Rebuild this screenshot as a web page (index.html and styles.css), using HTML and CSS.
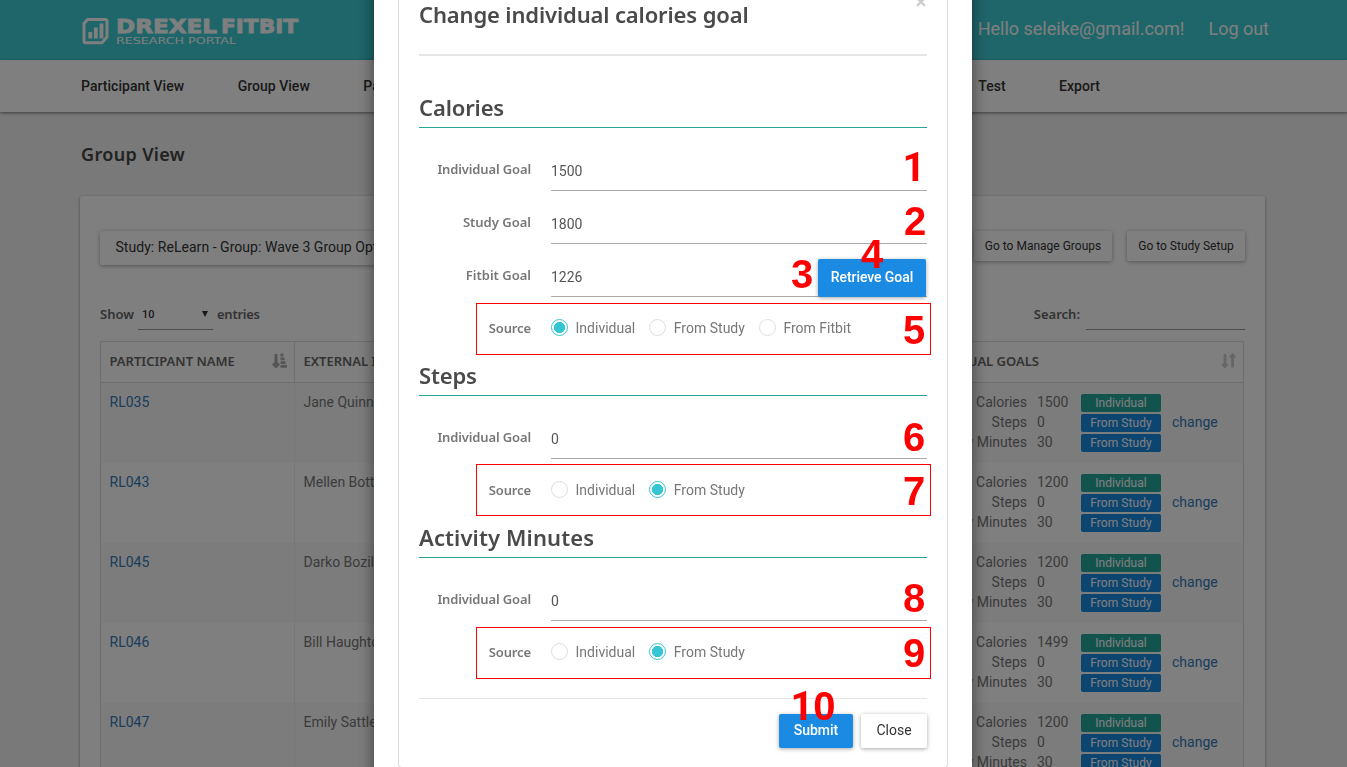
FILE: index.html
```
<!DOCTYPE html>
<html lang="en">
<head>
<meta charset="utf-8">
<title>Drexel Fitbit Research Portal</title>
<link rel="stylesheet" href="styles.css">
</head>
<body>
<div class="page">
  <header class="topbar">
    <svg class="logo" width="220" height="34" viewBox="0 -2 220 34">
      <path d="M7 3H25a1.500 1.500 0 0 1 1.500 1.500V20.500L21.500 26.200H5A1.500 1.500 0 0 1 3.500 24.700V7Z" transform="translate(-.5 .5)" fill="none" stroke="#fff" stroke-width="3" stroke-linejoin="round"/>
      <path d="M9.300 16v6.500M14.800 11.500v11M20.500 7.500v15" stroke="#fff" stroke-width="3.800"/>
      <text class="logo-main" x="35" y="17" textLength="101" lengthAdjust="spacingAndGlyphs">DREXEL</text>
      <text class="logo-main" x="140" y="17" textLength="77" lengthAdjust="spacingAndGlyphs">FITBIT</text>
      <text class="logo-sub" x="35" y="28" textLength="120" lengthAdjust="spacingAndGlyphs">RESEARCH PORTAL</text>
    </svg>
    <div class="user"><span>Hello seleike@gmail.com!</span><span>Log out</span></div>
  </header>
  <nav class="nav">
    <div class="nav-group"><span>Participant View</span><span>Group View</span><span>Participants</span></div>
    <div class="nav-group"><span>Test</span><span>Export</span></div>
  </nav>
  <h1 class="page-title">Group View</h1>
  <main class="card">
    <div class="toolbar">
      <div class="btn study">Study: ReLearn - Group: Wave 3 Group Options</div>
      <div class="toolbar-right"><div class="btn small manage">Go to Manage Groups</div><div class="btn small setup">Go to Study Setup</div></div>
    </div>
    <div class="filters">
      <div class="length"><span class="strong show">Show</span><span class="select"><span>10</span><i class="caret"></i></span><span class="strong entries">entries</span></div>
      <div class="search"><span class="strong searchlabel">Search:</span><span class="search-input"></span></div>
    </div>
    <div class="table">
      <div class="row head">
        <div class="cell name"><span>PARTICIPANT NAME</span>
          <svg class="sort" width="16" height="16" viewBox="0 0 16 16"><path d="M4 1v12M1 10.500l3 3 3-3" fill="none" stroke="#aaa" stroke-width="3"/><path d="M8.500 2h3M8.500 5.800h4M8.500 9.600h5M8.500 13.400h6.500" stroke="#aaa" stroke-width="2.800"/></svg></div>
        <div class="cell ext"><span>EXTERNAL ID</span></div>
        <div class="cell goals-head"><span>INDIVIDUAL GOALS</span>
          <svg class="sort" width="16" height="16" viewBox="0 0 16 16"><path d="M4 1v12M1.500 11 4 13.500 6.500 11M11.500 14.500V3M9 4.500 11.500 2 14 4.500" fill="none" stroke="#ccc" stroke-width="2.800"/></svg></div>
      </div>
      <div class="row odd"><div class="cell name link">RL035</div><div class="cell ext">Jane Quinn</div><div class="cell goals"><div class="metric"><span>Calories</span><span>Steps</span><span>Activity Minutes</span></div><div class="value"><span>1500</span><span>0</span><span>30</span></div><div class="badges"><b class="ind">Individual</b><b>From Study</b><b>From Study</b></div><span class="link change">change</span></div></div>
      <div class="row"><div class="cell name link">RL043</div><div class="cell ext">Mellen Botts</div><div class="cell goals"><div class="metric"><span>Calories</span><span>Steps</span><span>Activity Minutes</span></div><div class="value"><span>1200</span><span>0</span><span>30</span></div><div class="badges"><b class="ind">Individual</b><b>From Study</b><b>From Study</b></div><span class="link change">change</span></div></div>
      <div class="row odd"><div class="cell name link">RL045</div><div class="cell ext">Darko Bozil</div><div class="cell goals"><div class="metric"><span>Calories</span><span>Steps</span><span>Activity Minutes</span></div><div class="value"><span>1200</span><span>0</span><span>30</span></div><div class="badges"><b class="ind">Individual</b><b>From Study</b><b>From Study</b></div><span class="link change">change</span></div></div>
      <div class="row"><div class="cell name link">RL046</div><div class="cell ext">Bill Haughton</div><div class="cell goals"><div class="metric"><span>Calories</span><span>Steps</span><span>Activity Minutes</span></div><div class="value"><span>1499</span><span>0</span><span>30</span></div><div class="badges"><b class="ind">Individual</b><b>From Study</b><b>From Study</b></div><span class="link change">change</span></div></div>
      <div class="row odd"><div class="cell name link">RL047</div><div class="cell ext">Emily Sattler</div><div class="cell goals"><div class="metric"><span>Calories</span><span>Steps</span><span>Activity Minutes</span></div><div class="value"><span>1200</span><span>0</span><span>30</span></div><div class="badges"><b class="ind">Individual</b><b>From Study</b><b>From Study</b></div><span class="link change">change</span></div></div>
    </div>
  </main>
</div>
<div class="backdrop">
  <section class="modal">
    <div class="portlet">
      <div class="modal-title"><h2>Change individual calories goal</h2>
        <svg class="close" width="10" height="10" viewBox="0 0 10 10"><path d="M1 1l8 8M9 1L1 9" stroke="#ccc" stroke-width="2.200"/></svg></div>
      <h2 class="section first">Calories</h2>
      <div class="field tall"><label>Individual Goal</label><span class="input">1500</span></div>
      <div class="field"><label class="wide">Study Goal</label><span class="input">1800</span></div>
      <div class="field"><label class="wide">Fitbit Goal</label><span class="input">1226</span><div class="btn blue retrieve">Retrieve Goal</div></div>
      <div class="source"><label>Source</label><i class="radio on"></i><span class="opt">Individual</span><i class="radio"></i><span class="opt">From Study</span><i class="radio"></i><span class="opt">From Fitbit</span><div class="outline"></div></div>
      <h2 class="section">Steps</h2>
      <div class="field tall"><label>Individual Goal</label><span class="input">0</span></div>
      <div class="source"><label>Source</label><i class="radio"></i><span class="opt">Individual</span><i class="radio on"></i><span class="opt">From Study</span><div class="outline up"></div></div>
      <h2 class="section activity">Activity Minutes</h2>
      <div class="field tall"><label>Individual Goal</label><span class="input">0</span></div>
      <div class="source"><label>Source</label><i class="radio"></i><span class="opt">Individual</span><i class="radio on"></i><span class="opt">From Study</span><div class="outline"></div></div>
      <div class="actions"><div class="btn blue submit">Submit</div><div class="btn closebtn">Close</div></div>
    </div>
  </section>
  <span class="mark one m1">1</span><span class="mark m2">2</span><span class="mark m3">3</span><span class="mark m4">4</span><span class="mark m5">5</span><span class="mark m6">6</span><span class="mark m7">7</span><span class="mark m8">8</span><span class="mark m9">9</span><span class="mark m10"><span class="one">1</span>0</span>
</div>
</body>
</html>
```
FILE: styles.css
```
* { box-sizing: border-box; }
html, body { margin: 0; height: 767px; overflow: hidden; }
body { font: 14px/20px Roboto, sans-serif; color: #777; }
h1, h2 { margin: 0; font-weight: 600; }
h1, h2, label, .strong, .head { font-family: "Noto Sans", sans-serif; }
span, label, .btn { white-space: nowrap; }
.page { width: 1347px; height: 767px; overflow: hidden; background: #f2f2f2; }

.topbar { height: 60px; padding: 0 78px 2px 81px; background: #3eccd6; display: flex; justify-content: space-between; align-items: center; color: #fff; }
.logo { margin-top: 4px; }
.logo-main { font: 700 20px "DejaVu Sans", sans-serif; fill: #fff; stroke: #fff; stroke-width: .8px; }
.logo-sub { font: 400 9px "DejaVu Sans", sans-serif; fill: #fff; }
.user { display: flex; gap: 24px; font-size: 18px; letter-spacing: -.01px; }
.nav { height: 52px; padding: 0 247px 1px 81px; background: #fff; display: flex; justify-content: space-between; align-items: center; color: #333; font-weight: 500; box-shadow: 0 1px 3px rgba(0,0,0,.5); }
.nav-group { display: flex; gap: 53.5px; letter-spacing: .03px; }
.page-title { padding: 29px 0 0 81px; height: 84px; font-size: 18px; line-height: 26px; color: #444; letter-spacing: .35px; }

.card { margin: 0 82px 0 80px; height: 700px; padding: 35px 20px 0; background: #fff; border-radius: 3px; box-shadow: 0 1px 3px rgba(0,0,0,.4); }
.btn { border-radius: 2px; background: #fff; color: #333; box-shadow: 0 1px 4px rgba(0,0,0,.35); display: flex; align-items: center; justify-content: center; padding-bottom: 2px; }
.toolbar { display: flex; justify-content: space-between; height: 64px; align-items: flex-start; }
.study { height: 34px; width: 340px; padding-left: 15.5px; justify-content: flex-start; letter-spacing: .04px; }
.toolbar-right { display: flex; gap: 15px; }
.small { height: 30px; font-size: 12px; padding-bottom: 0; }
.manage { width: 138px; }
.setup { width: 118px; }
.filters { height: 46px; display: flex; justify-content: space-between; }
.strong { font-weight: 600; font-size: 13px; color: #666; }
.length, .search { display: flex; height: 35px; line-height: 39px; }
.show { width: 38px; }
.entries { letter-spacing: -.25px; }
.select { width: 75px; padding: 4px 5px 0 4px; border-bottom: 1px solid #999; display: flex; justify-content: space-between; align-items: center; font: 500 11px Roboto, sans-serif; color: #333; margin-right: 4px; }
.caret { border: 3.5px solid transparent; border-top: 6px solid #333; border-bottom: 0; }
.search-input { width: 159px; border-bottom: 1px solid #999; margin-left: 6px; }

.table { width: 1144px; border: 1px solid #ddd; height: 600px; }
.row { display: grid; grid-template-columns: 194px 300px 1fr; height: 80px; }
.odd { background: #f9f9f9; }
.head { height: 41px; border-bottom: 1px solid #ddd; font-weight: 600; font-size: 13px; color: #666; }
.cell { padding: 9px 9px 0 8.5px; border-right: 1px solid #eee; }
.cell:last-child { border-right: 0; }
.head .cell { display: flex; justify-content: space-between; align-items: center; padding: 0 6px 2px 8.5px; border-right-color: #ddd; }
.head .cell:last-child { justify-content: flex-end; gap: 182px; padding-right: 6px; }
.link { color: #337ab7; }
.goals { display: grid; grid-template-columns: 1fr 34px 80px 72px; column-gap: 10px; padding-right: 0; }
.metric, .value, .badges { display: flex; flex-direction: column; }
.metric { align-items: flex-end; }
.badges { gap: 2px; padding-top: 2px; }
.badges b { height: 18px; border-radius: 2px; background: #1a8ae2; color: #fff; font: 400 12px/18px Roboto, sans-serif; text-align: center; letter-spacing: .05px; }
.badges .ind { background: #26a69a; }
.change { padding: 20px 0 0 1px; }

.backdrop { position: fixed; inset: 0; background: rgba(0,0,0,.5); overflow: hidden; }
.modal { position: absolute; left: 374px; top: -40px; width: 598px; height: 860px; padding: 0 24px; background: #fff; box-shadow: 0 5px 15px rgba(0,0,0,.5); }
.portlet { height: 808px; border: 1px solid #ddd; border-top: 0; padding: 39px 20px 0; border-radius: 4px; }
.modal-title { height: 57px; border-bottom: 2px solid #e5e5e5; display: flex; justify-content: space-between; align-items: flex-start; }
h2 { font-size: 22px; color: #4a4a4a; line-height: 30px; letter-spacing: -.14px; }
.close { margin: -2px 1px 0 0; }
.section { height: 34px; border-bottom: 1px solid #26a69a; line-height: 27px; }
.activity { letter-spacing: .12px; }
.first { margin-top: 38px; }
.field { height: 53px; display: grid; grid-template-columns: 112px 1fr auto; column-gap: 20px; align-items: end; }
.tall { height: 63px; }
label { font-weight: 600; font-size: 13px; line-height: 18px; text-align: right; color: #777; letter-spacing: -.13px; }
.wide { letter-spacing: 0; }
.field label { padding-bottom: 13px; }
.input { height: 40px; line-height: 40px; border-bottom: 1px solid #aaa; color: #555; letter-spacing: -.04px; grid-column: 2 / 4; grid-row: 1; }
.blue { background: #1a8ae2; color: #fff; font-weight: 500; }
.retrieve { width: 108px; height: 38px; margin-right: 1px; letter-spacing: -.08px; grid-column: 3; grid-row: 1; }
.source { position: relative; height: 65px; padding-top: 21px; display: flex; align-items: flex-start; }
.source label { width: 112px; margin-right: 20px; line-height: 20px; }
.radio { width: 17px; height: 17px; border: 1px solid #ddd; border-radius: 50%; margin-top: 1px; }
.on { border-color: #36c6d3; background: radial-gradient(circle, #36c6d3 5.300px, #fff 5.900px); }
.opt { margin: 0 14px 0 7.500px; letter-spacing: .01px; }
.outline { position: absolute; left: 57px; top: 6px; width: 455px; height: 52px; border: 1px solid #f00; }
.up { top: 5px; }
.actions { margin-top: 12px; border-top: 1px solid #e5e5e5; padding-top: 15px; display: flex; justify-content: flex-end; gap: 8px; }
.submit { width: 74px; height: 34px; }
.closebtn { width: 66px; height: 34px; }

.mark { position: absolute; width: 50px; height: 40px; text-align: center; font: 700 40px/40px "Liberation Sans", sans-serif; color: #f00; }
.one { font-family: Roboto, sans-serif; }
.m1 { left: 889px; top: 148px; }
.m2 { left: 890px; top: 201px; }
.m3 { left: 777px; top: 254px; }
.m4 { left: 847px; top: 234px; }
.m5 { left: 889px; top: 310px; }
.m6 { left: 889px; top: 417px; }
.m7 { left: 889px; top: 471px; }
.m8 { left: 889px; top: 578px; }
.m9 { left: 889px; top: 633px; }
.m10 { left: 788px; top: 686px; }
```
